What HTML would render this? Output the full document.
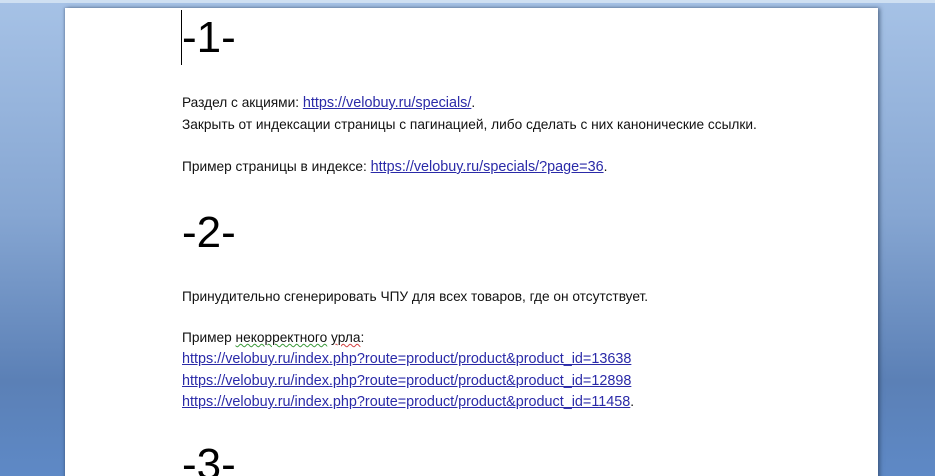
<!DOCTYPE html>
<html><head><meta charset="utf-8"><style>
html,body{margin:0;padding:0;width:935px;height:476px;overflow:hidden}
body{background:linear-gradient(#a6c2e6 0%,#86a6d2 45%,#5b80b6 80%,#5e89c6 100%);position:relative;font-family:"Liberation Sans","DejaVu Sans",sans-serif}
.top{position:absolute;left:0;top:0;width:935px;height:3px;background:#cfe0f2}
.page{position:absolute;left:65px;top:8px;width:813px;height:480px;background:#fff;box-shadow:2px 0 4px rgba(40,60,90,.6),-1px 0 2px rgba(40,60,90,.3)}
.t{position:absolute;left:182px;font-size:13.7px;color:#111;white-space:nowrap;line-height:16px}
.h{position:absolute;left:182px;font-size:44px;color:#000;line-height:46px;font-family:"Liberation Sans",sans-serif}
a{color:#2a2aa8;text-decoration:underline;font-size:14.4px}
.cur{position:absolute;left:181px;top:10px;width:1px;height:55px;background:#000}
.sq{text-decoration:underline wavy #3a9a3a;text-decoration-thickness:1px}
.sr{text-decoration:underline wavy #d04040;text-decoration-thickness:1px}
</style></head><body>
<div class="top"></div>
<div class="page"></div>
<div class="cur"></div>
<div class="h" style="top:15px">-1-</div>
<div class="t" style="top:95px">Раздел с акциями: <a>https://velobuy.ru/specials/</a>.</div>
<div class="t" style="top:117px">Закрыть от индексации страницы с пагинацией, либо сделать с них канонические ссылки.</div>
<div class="t" style="top:159px">Пример страницы в индексе: <a>https://velobuy.ru/specials/?page=36</a>.</div>
<div class="h" style="top:210px">-2-</div>
<div class="t" style="top:289px">Принудительно сгенерировать ЧПУ для всех товаров, где он отсутствует.</div>
<div class="t" style="top:330px">Пример <span class="sq">некорректного</span> <span class="sr">урла</span>:</div>
<div class="t" style="top:351px"><a>https://velobuy.ru/index.php?route=product/product&amp;product_id=13638</a></div>
<div class="t" style="top:373px"><a>https://velobuy.ru/index.php?route=product/product&amp;product_id=12898</a></div>
<div class="t" style="top:394px"><a>https://velobuy.ru/index.php?route=product/product&amp;product_id=11458</a>.</div>
<div class="h" style="top:442px">-3-</div>
</body></html>
